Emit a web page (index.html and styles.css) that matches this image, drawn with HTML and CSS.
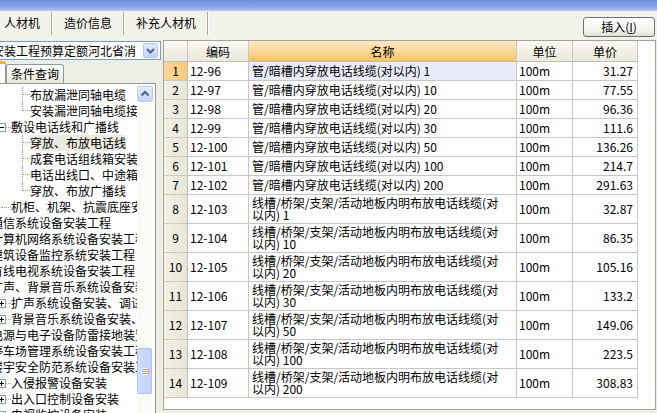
FILE: index.html
```html
<!DOCTYPE html>
<html lang="zh-CN">
<head>
<meta charset="utf-8">
<title>人材机</title>
<link rel="stylesheet" href="styles.css">
</head>
<body>
<div class="titlebar"></div>
<div class="toolbar">
  <div class="tabs">
    <div class="tab">人材机</div>
    <div class="tab">造价信息</div>
    <div class="tab">补充人材机</div>
  </div>
  <button class="insert">插入(<u>I</u>)</button>
</div>
<div class="main">
  <div class="side">
    <div class="combo">
      <div class="combo-text"><span>安装工程预算定额河北省消</span></div>
      <div class="combo-btn"><svg width="15" height="15" viewBox="0 0 15 15"><path d="M4 6 L7.5 9.5 L11 6" fill="none" stroke="#4d6185" stroke-width="2"/></svg></div>
    </div>
    <div class="subtabs">
      <div class="subtab sel"></div>
      <div class="subtab">条件查询</div>
    </div>
    <div class="treebox">
      <div class="treeview">
        <div class="tree">
          <div class="node l3"><span class="lead"></span><span class="conn"></span><span class="label">布放漏泄同轴电缆</span></div>
          <div class="node l3"><span class="lead"></span><span class="conn last"></span><span class="label">安装漏泄同轴电缆接头</span></div>
          <div class="node l2"><span class="lead"></span><span class="exp"><svg width="9" height="9" viewBox="0 0 9 9"><rect x="0.5" y="0.5" width="8" height="8" fill="#fff" stroke="#8a9bb0"/><path d="M2 4.5 H7" stroke="#000"/></svg></span><span class="dash"></span><span class="label">敷设电话线和广播线</span></div>
          <div class="node l3"><span class="lead"></span><span class="conn"></span><span class="label sel">穿放、布放电话线</span></div>
          <div class="node l3"><span class="lead"></span><span class="conn"></span><span class="label">成套电话组线箱安装</span></div>
          <div class="node l3"><span class="lead"></span><span class="conn"></span><span class="label">电话出线口、中途箱安装</span></div>
          <div class="node l3"><span class="lead"></span><span class="conn last"></span><span class="label">穿放、布放广播线</span></div>
          <div class="node l2 leaf"><span class="lead"></span><span class="dash"></span><span class="label">机柜、机架、抗震底座安装</span></div>
          <div class="node l1"><span class="lead"></span><span class="label">通信系统设备安装工程</span></div>
          <div class="node l1"><span class="lead"></span><span class="label">计算机网络系统设备安装工程</span></div>
          <div class="node l1"><span class="lead"></span><span class="label">建筑设备监控系统安装工程</span></div>
          <div class="node l1"><span class="lead"></span><span class="label">有线电视系统设备安装工程</span></div>
          <div class="node l1"><span class="lead"></span><span class="label">扩声、背景音乐系统设备安装工程</span></div>
          <div class="node l2"><span class="lead"></span><span class="exp"><svg width="9" height="9" viewBox="0 0 9 9"><rect x="0.5" y="0.5" width="8" height="8" fill="#fff" stroke="#8a9bb0"/><path d="M2 4.5 H7 M4.5 2 V7" stroke="#000"/></svg></span><span class="dash"></span><span class="label">扩声系统设备安装、调试</span></div>
          <div class="node l2"><span class="lead"></span><span class="exp"><svg width="9" height="9" viewBox="0 0 9 9"><rect x="0.5" y="0.5" width="8" height="8" fill="#fff" stroke="#8a9bb0"/><path d="M2 4.5 H7 M4.5 2 V7" stroke="#000"/></svg></span><span class="dash"></span><span class="label">背景音乐系统设备安装、调试</span></div>
          <div class="node l1"><span class="lead"></span><span class="label">电源与电子设备防雷接地装置安装工程</span></div>
          <div class="node l1"><span class="lead"></span><span class="label">停车场管理系统设备安装工程</span></div>
          <div class="node l1"><span class="lead"></span><span class="label">楼宇安全防范系统设备安装工程</span></div>
          <div class="node l2"><span class="lead"></span><span class="exp"><svg width="9" height="9" viewBox="0 0 9 9"><rect x="0.5" y="0.5" width="8" height="8" fill="#fff" stroke="#8a9bb0"/><path d="M2 4.5 H7 M4.5 2 V7" stroke="#000"/></svg></span><span class="dash"></span><span class="label">入侵报警设备安装</span></div>
          <div class="node l2"><span class="lead"></span><span class="exp"><svg width="9" height="9" viewBox="0 0 9 9"><rect x="0.5" y="0.5" width="8" height="8" fill="#fff" stroke="#8a9bb0"/><path d="M2 4.5 H7 M4.5 2 V7" stroke="#000"/></svg></span><span class="dash"></span><span class="label">出入口控制设备安装</span></div>
          <div class="node l2"><span class="lead"></span><span class="exp"><svg width="9" height="9" viewBox="0 0 9 9"><rect x="0.5" y="0.5" width="8" height="8" fill="#fff" stroke="#8a9bb0"/><path d="M2 4.5 H7 M4.5 2 V7" stroke="#000"/></svg></span><span class="dash"></span><span class="label">电视监控设备安装</span></div>
        </div>
      </div>
      <div class="vscroll">
        <div class="sb-up"><svg width="14" height="14" viewBox="0 0 14 14"><path d="M3.5 8.5 L7 5 L10.5 8.5" fill="none" stroke="#4d6185" stroke-width="2"/></svg></div>
        <div class="sb-thumb"><svg width="8" height="8" viewBox="0 0 8 8"><path d="M0 1.5 H7 M0 3.5 H7 M0 5.5 H7 M0 7.5 H7" stroke="#eef3ff"/><path d="M1 2.5 H8 M1 4.5 H8 M1 6.5 H8" stroke="#8fa8e2"/></svg></div>
      </div>
    </div>
  </div>
  <div class="grid">
    <table>
      <colgroup>
        <col class="c-no"><col class="c-code"><col class="c-name"><col class="c-unit"><col class="c-price">
      </colgroup>
      <thead>
        <tr><th class="no"></th><th>编码</th><th class="hot">名称</th><th>单位</th><th>单价</th></tr>
      </thead>
      <tbody>
        <tr><td class="no cur">1</td><td>12-96</td><td class="name cursel">管/暗槽内穿放电话线缆(对以内) 1</td><td>100m</td><td class="price">31.27</td></tr>
        <tr><td class="no">2</td><td>12-97</td><td class="name">管/暗槽内穿放电话线缆(对以内) 10</td><td>100m</td><td class="price">77.55</td></tr>
        <tr><td class="no">3</td><td>12-98</td><td class="name">管/暗槽内穿放电话线缆(对以内) 20</td><td>100m</td><td class="price">96.36</td></tr>
        <tr><td class="no">4</td><td>12-99</td><td class="name">管/暗槽内穿放电话线缆(对以内) 30</td><td>100m</td><td class="price">111.6</td></tr>
        <tr><td class="no">5</td><td>12-100</td><td class="name">管/暗槽内穿放电话线缆(对以内) 50</td><td>100m</td><td class="price">136.26</td></tr>
        <tr><td class="no">6</td><td>12-101</td><td class="name">管/暗槽内穿放电话线缆(对以内) 100</td><td>100m</td><td class="price">214.7</td></tr>
        <tr><td class="no">7</td><td>12-102</td><td class="name">管/暗槽内穿放电话线缆(对以内) 200</td><td>100m</td><td class="price">291.63</td></tr>
        <tr class="tall"><td class="no">8</td><td>12-103</td><td class="name">线槽/桥架/支架/活动地板内明布放电话线缆(对<br>以内) 1</td><td>100m</td><td class="price">32.87</td></tr>
        <tr class="tall"><td class="no">9</td><td>12-104</td><td class="name">线槽/桥架/支架/活动地板内明布放电话线缆(对<br>以内) 10</td><td>100m</td><td class="price">86.35</td></tr>
        <tr class="tall"><td class="no">10</td><td>12-105</td><td class="name">线槽/桥架/支架/活动地板内明布放电话线缆(对<br>以内) 20</td><td>100m</td><td class="price">105.16</td></tr>
        <tr class="tall"><td class="no">11</td><td>12-106</td><td class="name">线槽/桥架/支架/活动地板内明布放电话线缆(对<br>以内) 30</td><td>100m</td><td class="price">133.2</td></tr>
        <tr class="tall"><td class="no">12</td><td>12-107</td><td class="name">线槽/桥架/支架/活动地板内明布放电话线缆(对<br>以内) 50</td><td>100m</td><td class="price">149.06</td></tr>
        <tr class="tall"><td class="no">13</td><td>12-108</td><td class="name">线槽/桥架/支架/活动地板内明布放电话线缆(对<br>以内) 100</td><td>100m</td><td class="price">223.5</td></tr>
        <tr class="tall"><td class="no">14</td><td>12-109</td><td class="name">线槽/桥架/支架/活动地板内明布放电话线缆(对<br>以内) 200</td><td>100m</td><td class="price">308.83</td></tr>
      </tbody>
    </table>
  </div>
</div>
</body>
</html>
```
FILE: styles.css
```css
html, body {
  margin: 0;
  padding: 0;
  width: 657px;
  height: 413px;
  overflow: hidden;
  background: #efeee4;
  font-family: "Noto Sans CJK SC", "Noto Sans", sans-serif;
  font-size: 12px;
  color: #000;
}

.titlebar {
  height: 11px;
  background: linear-gradient(#6f8fd9, #8ea9e8 70%, #b9cbf1);
}

.toolbar {
  height: 29px;
  display: flex;
  align-items: flex-start;
  background: #f3f2ea;
}

.tabs {
  display: flex;
  height: 24px;
  margin-left: -8px;
}

.tab {
  padding: 0 11px 0 12px;
  height: 23px;
  margin-top: 1px;
  line-height: 22px;
  border-right: 1px solid #a9a89c;
  box-shadow: 1px 0 0 #fff;
  white-space: nowrap;
}

.insert {
  margin: 6px 2px 0 auto;
  width: 72px;
  height: 20px;
  padding: 0;
  border: 1px solid #707070;
  border-radius: 3px;
  background: linear-gradient(#ffffff, #f3f2ec 75%, #dedcd2);
  font-family: inherit;
  font-size: 12px;
  line-height: 18px;
  color: #000;
  text-align: center;
}

.insert u {
  text-decoration: underline;
}

.main {
  display: flex;
  height: 373px;
  overflow: hidden;
}

.side {
  width: 163px;
  flex: none;
  display: flex;
  flex-direction: column;
  overflow: hidden;
}

.combo {
  box-sizing: border-box;
  margin: 1px 0 0 -2px;
  width: 163px;
  height: 19px;
  border: 1px solid #7f9db9;
  background: #fff;
  display: flex;
  align-items: center;
  flex: none;
}

.combo-text {
  flex: 1;
  overflow: hidden;
  white-space: nowrap;
  line-height: 17px;
}

.combo-text span {
  margin-left: -7px;
}

.combo-btn {
  width: 15px;
  height: 15px;
  margin-right: 2px;
  box-sizing: border-box;
  border: 1px solid #b9c9f3;
  border-radius: 2px;
  background: linear-gradient(#e3ebfd, #c2d3fa);
  display: flex;
}

.combo-btn svg {
  margin: -1px;
}

.subtabs {
  display: flex;
  align-items: flex-end;
  height: 22px;
  margin-top: 1px;
  flex: none;
}

.subtab {
  box-sizing: border-box;
  height: 19px;
  padding: 0 4px;
  line-height: 17px;
  border: 1px solid #919b9c;
  border-bottom: none;
  border-radius: 3px 3px 0 0;
  background: linear-gradient(#ffffff, #f3f2ec 60%, #e6e4da);
  white-space: nowrap;
}

.subtab.sel {
  width: 7px;
  height: 22px;
  margin-left: -1px;
  padding: 0;
  border-left: none;
  border-top: 3px solid #f6b44a;
  border-radius: 0 3px 0 0;
  background: #fff;
}

.treebox {
  box-sizing: border-box;
  margin-left: -1px;
  width: 157px;
  height: 345px;
  flex: none;
  border: 1px solid #919b9c;
  background: #fff;
  display: flex;
  padding-right: 2px;
}

.treeview {
  width: 137px;
  flex: none;
  overflow: hidden;
}

.tree {
  margin-left: -28px;
  padding-top: 3px;
}

.node {
  display: flex;
  align-items: center;
  height: 16px;
  white-space: nowrap;
}

.lead {
  flex: none;
}

.l1 .lead { width: 19px; }
.l2 .lead { width: 25px; }
.l2.leaf .lead { width: 29px; }
.l3 .lead { width: 50px; }

.exp {
  flex: none;
  width: 9px;
  height: 9px;
  display: flex;
}

.dash {
  flex: none;
  width: 5px;
  height: 1px;
  border-top: 1px dotted #a0a0a0;
  box-sizing: border-box;
}

.l2.leaf .dash {
  width: 10px;
}

.conn {
  flex: none;
  box-sizing: border-box;
  width: 8px;
  height: 16px;
  border-left: 1px dotted #a0a0a0;
  align-self: flex-start;
}

.conn::before {
  content: "";
  display: block;
  height: 8px;
  border-bottom: 1px dotted #a0a0a0;
  box-sizing: border-box;
}

.conn.last {
  height: 8px;
}

.label {
  line-height: 16px;
}

.label.sel {
  background: #ecebe1;
}

.vscroll {
  width: 16px;
  flex: none;
  display: flex;
  flex-direction: column;
  background: #fbfbf8;
}

.sb-up {
  box-sizing: border-box;
  margin-top: 2px;
  width: 16px;
  height: 16px;
  border: 1px solid #bdcdf6;
  border-radius: 2px;
  background: linear-gradient(#e4ecfd, #c3d4fa);
  display: flex;
  align-items: center;
  justify-content: center;
}

.sb-thumb {
  box-sizing: border-box;
  margin-top: 246px;
  width: 15px;
  height: 46px;
  border: 1px solid #b1c5f4;
  border-radius: 2px;
  background: linear-gradient(to right, #cfdcfc, #c2d3fa);
  display: flex;
  align-items: center;
  justify-content: center;
}

.grid {
  box-sizing: border-box;
  flex: 1;
  height: 370px;
  margin-right: 1px;
  border: 1px solid #a5a396;
  background: #fff;
  overflow: hidden;
}

table {
  border-collapse: separate;
  border-spacing: 0;
  table-layout: fixed;
  width: 474px;
}

.c-no { width: 24px; }
.c-code { width: 61px; }
.c-name { width: 268px; }
.c-unit { width: 56px; }
.c-price { width: 65px; }

th, td {
  padding: 0;
  font-weight: normal;
  font-size: 12px;
  white-space: nowrap;
  overflow: hidden;
  border-right: 1px solid #c6c6c6;
  border-bottom: 1px solid #c6c6c6;
}

thead tr {
  height: 21px;
}

th {
  text-align: center;
  background: linear-gradient(#f9f8f2, #ebe9dc);
  border-right-color: #cdcabb;
  border-bottom-color: #c2bfae;
}

th.hot {
  background: linear-gradient(#fee9c3, #fbd58f 60%, #f8c264);
}

tbody tr {
  height: 19px;
}

tbody tr.tall {
  height: 29px;
}

td {
  padding-left: 2px;
  line-height: 16px;
  vertical-align: middle;
}

td.no {
  padding: 0;
  text-align: center;
  background: linear-gradient(to right, #f2f1e6, #e8e6d6);
  border-right-color: #c2bfae;
  border-bottom-color: #cdcabb;
}

td.no.cur {
  background: linear-gradient(to right, #fcd79a, #f9c877);
}

td.name {
  padding-left: 3px;
}

td.cursel {
  background: #e9ecf8;
}

tr.tall td.name {
  line-height: 12px;
  white-space: normal;
}

td.price {
  padding: 0 4px 0 0;
  text-align: right;
}
```
